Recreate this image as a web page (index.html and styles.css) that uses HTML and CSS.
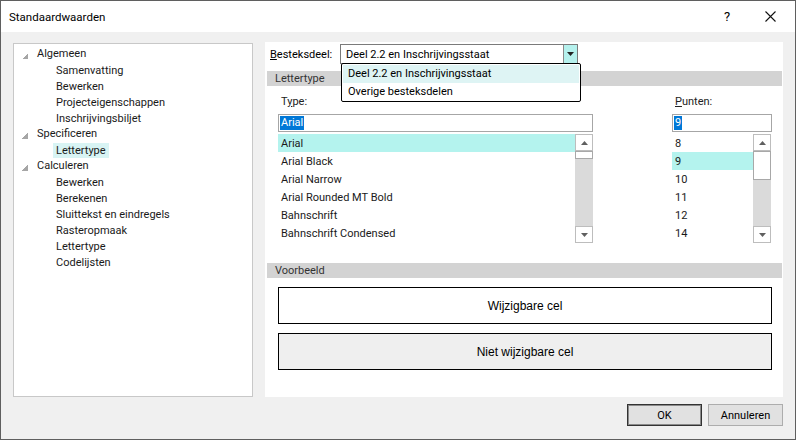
FILE: index.html
```html
<!DOCTYPE html>
<html lang="nl">
<head>
<meta charset="utf-8">
<title>Standaardwaarden</title>
<link rel="stylesheet" href="styles.css">
</head>
<body>
<div class="window">
  <div class="titlebar">
    <span class="title">Standaardwaarden</span>
    <span class="help">?</span>
    <span class="close"><svg width="11" height="11" viewBox="0 0 11 11"><path d="M0.5 0.5 L10.5 10.5 M10.5 0.5 L0.5 10.5" stroke="#111" stroke-width="1.1" fill="none"/></svg></span>
  </div>
  <div class="body">
    <div class="main">
      <div class="tree">
        <div class="node lvl1"><span class="exp"></span>Algemeen</div>
        <div class="node lvl2"><span class="txt">Samenvatting</span></div>
        <div class="node lvl2"><span class="txt">Bewerken</span></div>
        <div class="node lvl2"><span class="txt">Projecteigenschappen</span></div>
        <div class="node lvl2"><span class="txt">Inschrijvingsbiljet</span></div>
        <div class="node lvl1"><span class="exp"></span>Specificeren</div>
        <div class="node lvl2"><span class="txt sel">Lettertype</span></div>
        <div class="node lvl1"><span class="exp"></span>Calculeren</div>
        <div class="node lvl2"><span class="txt">Bewerken</span></div>
        <div class="node lvl2"><span class="txt">Berekenen</span></div>
        <div class="node lvl2"><span class="txt">Sluittekst en eindregels</span></div>
        <div class="node lvl2"><span class="txt">Rasteropmaak</span></div>
        <div class="node lvl2"><span class="txt">Lettertype</span></div>
        <div class="node lvl2"><span class="txt">Codelijsten</span></div>
      </div>
      <div class="content">
        <div class="besteks-row">
          <span class="lbl"><u>B</u>esteksdeel:</span>
          <div class="combo">
            <span class="combo-text">Deel 2.2 en Inschrijvingsstaat</span>
            <span class="combo-btn"><svg width="7" height="4" viewBox="0 0 7 4"><path d="M0 0 H7 L3.5 4 Z" fill="#222"/></svg></span>
            <div class="dropdown">
              <div class="dd-item active">Deel 2.2 en Inschrijvingsstaat</div>
              <div class="dd-item">Overige besteksdelen</div>
            </div>
          </div>
        </div>
        <div class="section-header">Lettertype</div>
        <div class="font-grid">
          <div class="col type-col">
            <div class="field-lbl">T<u>y</u>pe:</div>
            <div class="input"><span class="selected-text">Arial</span></div>
            <div class="listbox">
              <div class="items">
                <div class="item hl">Arial</div>
                <div class="item">Arial Black</div>
                <div class="item">Arial Narrow</div>
                <div class="item">Arial Rounded MT Bold</div>
                <div class="item">Bahnschrift</div>
                <div class="item">Bahnschrift Condensed</div>
              </div>
              <div class="scrollbar">
                <div class="sb-btn"><svg width="7" height="4" viewBox="0 0 7 4"><path d="M0 4 H7 L3.5 0 Z" fill="#606060"/></svg></div>
                <div class="sb-track"><div class="sb-thumb small"></div></div>
                <div class="sb-btn"><svg width="7" height="4" viewBox="0 0 7 4"><path d="M0 0 H7 L3.5 4 Z" fill="#606060"/></svg></div>
              </div>
            </div>
          </div>
          <div class="col pts-col">
            <div class="field-lbl"><u>P</u>unten:</div>
            <div class="input"><span class="selected-text">9</span></div>
            <div class="listbox">
              <div class="items">
                <div class="item">8</div>
                <div class="item hl">9</div>
                <div class="item">10</div>
                <div class="item">11</div>
                <div class="item">12</div>
                <div class="item">14</div>
              </div>
              <div class="scrollbar">
                <div class="sb-btn"><svg width="7" height="4" viewBox="0 0 7 4"><path d="M0 4 H7 L3.5 0 Z" fill="#606060"/></svg></div>
                <div class="sb-track"><div class="sb-thumb big"></div></div>
                <div class="sb-btn"><svg width="7" height="4" viewBox="0 0 7 4"><path d="M0 0 H7 L3.5 4 Z" fill="#606060"/></svg></div>
              </div>
            </div>
          </div>
        </div>
        <div class="section-header voorbeeld">Voorbeeld</div>
        <div class="preview editable">Wijzigbare cel</div>
        <div class="preview readonly">Niet wijzigbare cel</div>
      </div>
    </div>
    <div class="footer">
      <button class="btn default">OK</button>
      <button class="btn">Annuleren</button>
    </div>
  </div>
</div>
</body>
</html>
```

FILE: styles.css
```css
* { box-sizing: border-box; }
html, body { margin: 0; padding: 0; background: #f0f0f0; }
body {
  font-family: Roboto, "Noto Sans", "Liberation Sans", sans-serif;
  font-size: 11px;
  color: #000;
}
u { text-decoration: underline; text-underline-offset: 1px; }

.window {
  width: 796px;
  height: 440px;
  border: 1px solid #5f5f5f;
  background: #f0f0f0;
  display: flex;
  flex-direction: column;
}
.titlebar {
  height: 31px;
  background: #fff;
  display: flex;
  align-items: center;
  flex-shrink: 0;
}
.title { margin-left: 8px; font-size: 11.5px; flex: 1; line-height: 16px; }
.help { width: 12px; font-size: 13px; margin-right: 29px; }
.close { width: 11px; height: 11px; margin-right: 19px; display: flex; }

.body { flex: 1; display: flex; flex-direction: column; }
.main { display: flex; padding: 10px 0 0 12px; gap: 12px; }

.tree {
  width: 240px;
  height: 354px;
  margin-top: 1px;
  padding-top: 2px;
  background: #fff;
  border: 1px solid #c8c8c8;
  color: #1a1a1a;
}
.node { height: 16px; line-height: 16px; display: flex; align-items: center; white-space: nowrap; }
.lvl1 { padding-left: 8px; }
.lvl2 { padding-left: 39px; }
.exp {
  width: 6px; height: 6px;
  margin-right: 9px;
  margin-top: 4px;
  background: linear-gradient(135deg, transparent 50%, #a6a6a6 50%);
}
.txt { padding: 0 3px; height: 15px; line-height: 15px; }
.txt.sel { background: #d8f4f4; }

.content {
  width: 518px;
  height: 355px;
  background: #fff;
  display: flex;
  flex-direction: column;
  padding: 0 1px 0 2px;
}
.besteks-row { display: flex; align-items: center; height: 20px; margin-top: 2px; padding-left: 3px; }
.lbl { width: 70px; }
.combo {
  position: relative;
  width: 238px;
  height: 20px;
  border: 1px solid #7a7a7a;
  display: flex;
  align-items: center;
}
.combo-text { flex: 1; padding-left: 5px; }
.combo-btn {
  width: 14px; height: 18px;
  background: #b5f1ed;
  border-left: 1px solid #8a8a8a;
  display: flex; align-items: center; justify-content: center;
}
.dropdown {
  position: absolute;
  left: 0; top: 18px;
  width: 240px;
  height: 39px;
  background: #fff;
  border: 1px solid #000;
  border-radius: 2px;
  padding: 1px 1px;
  z-index: 5;
}
.dd-item { height: 18px; line-height: 18px; padding-left: 5px; }
.dd-item.active { background: #def4f4; }

.section-header {
  height: 15px;
  line-height: 15px;
  background: #d3d3d3;
  color: #333;
  padding-left: 8px;
  margin-top: 7px;
}
.section-header.voorbeeld { margin-top: 20px; }

.font-grid {
  display: grid;
  grid-template-columns: 315px 100px;
  column-gap: 79px;
  padding-left: 11px;
}
.field-lbl { height: 16px; line-height: 16px; margin-top: 8px; padding-left: 3px; color: #222; }
.input {
  height: 18px;
  margin-top: 4px;
  border: 1px solid #a6a6a6;
  display: flex; align-items: center;
  padding-left: 1px;
}
.selected-text { background: #0078d7; color: #fff; height: 14px; line-height: 14px; padding: 0 1px; }
.listbox { display: flex; margin-top: 2px; height: 109px; }
.items { flex: 1; }
.item { height: 18px; line-height: 18px; padding: 1px 0 0 3px; color: #1a1a1a; overflow: visible; }
.item.hl { background: #b4f3ee; }
.type-col .scrollbar { width: 18px; }
.pts-col .scrollbar { width: 18px; margin-right: 1px; }
.scrollbar { display: flex; flex-direction: column; }
.sb-btn {
  height: 17px;
  border: 1px solid #bdbdbd;
  background: #fff;
  display: flex; align-items: center; justify-content: center;
}
.sb-track { flex: 1; background: #dadada; display: flex; flex-direction: column; }
.sb-thumb { background: #fff; border: 1px solid #a8a8a8; }
.sb-thumb.small { height: 8px; }
.sb-thumb.big { height: 29px; }

.preview {
  margin: 9px 0 0 11px;
  width: 494px;
  height: 37px;
  border: 1px solid #000;
  display: flex; align-items: center; justify-content: center;
  font-family: "Liberation Sans", Arial, sans-serif;
  font-size: 12px;
}
.preview.editable { background: #fff; }
.preview.readonly { background: #efefef; }

.footer {
  display: flex;
  justify-content: flex-end;
  gap: 6px;
  padding: 7px 12px 0 0;
}
.btn {
  width: 75px;
  height: 22px;
  background: #e1e1e1;
  border: 1px solid #adadad;
  font-family: Roboto, "Noto Sans", "Liberation Sans", sans-serif;
  font-size: 11px;
  color: #000;
  padding: 0;
}
.btn.default { border: 1px solid #333; box-shadow: inset 0 0 0 1px #8a8a8a; }
```
